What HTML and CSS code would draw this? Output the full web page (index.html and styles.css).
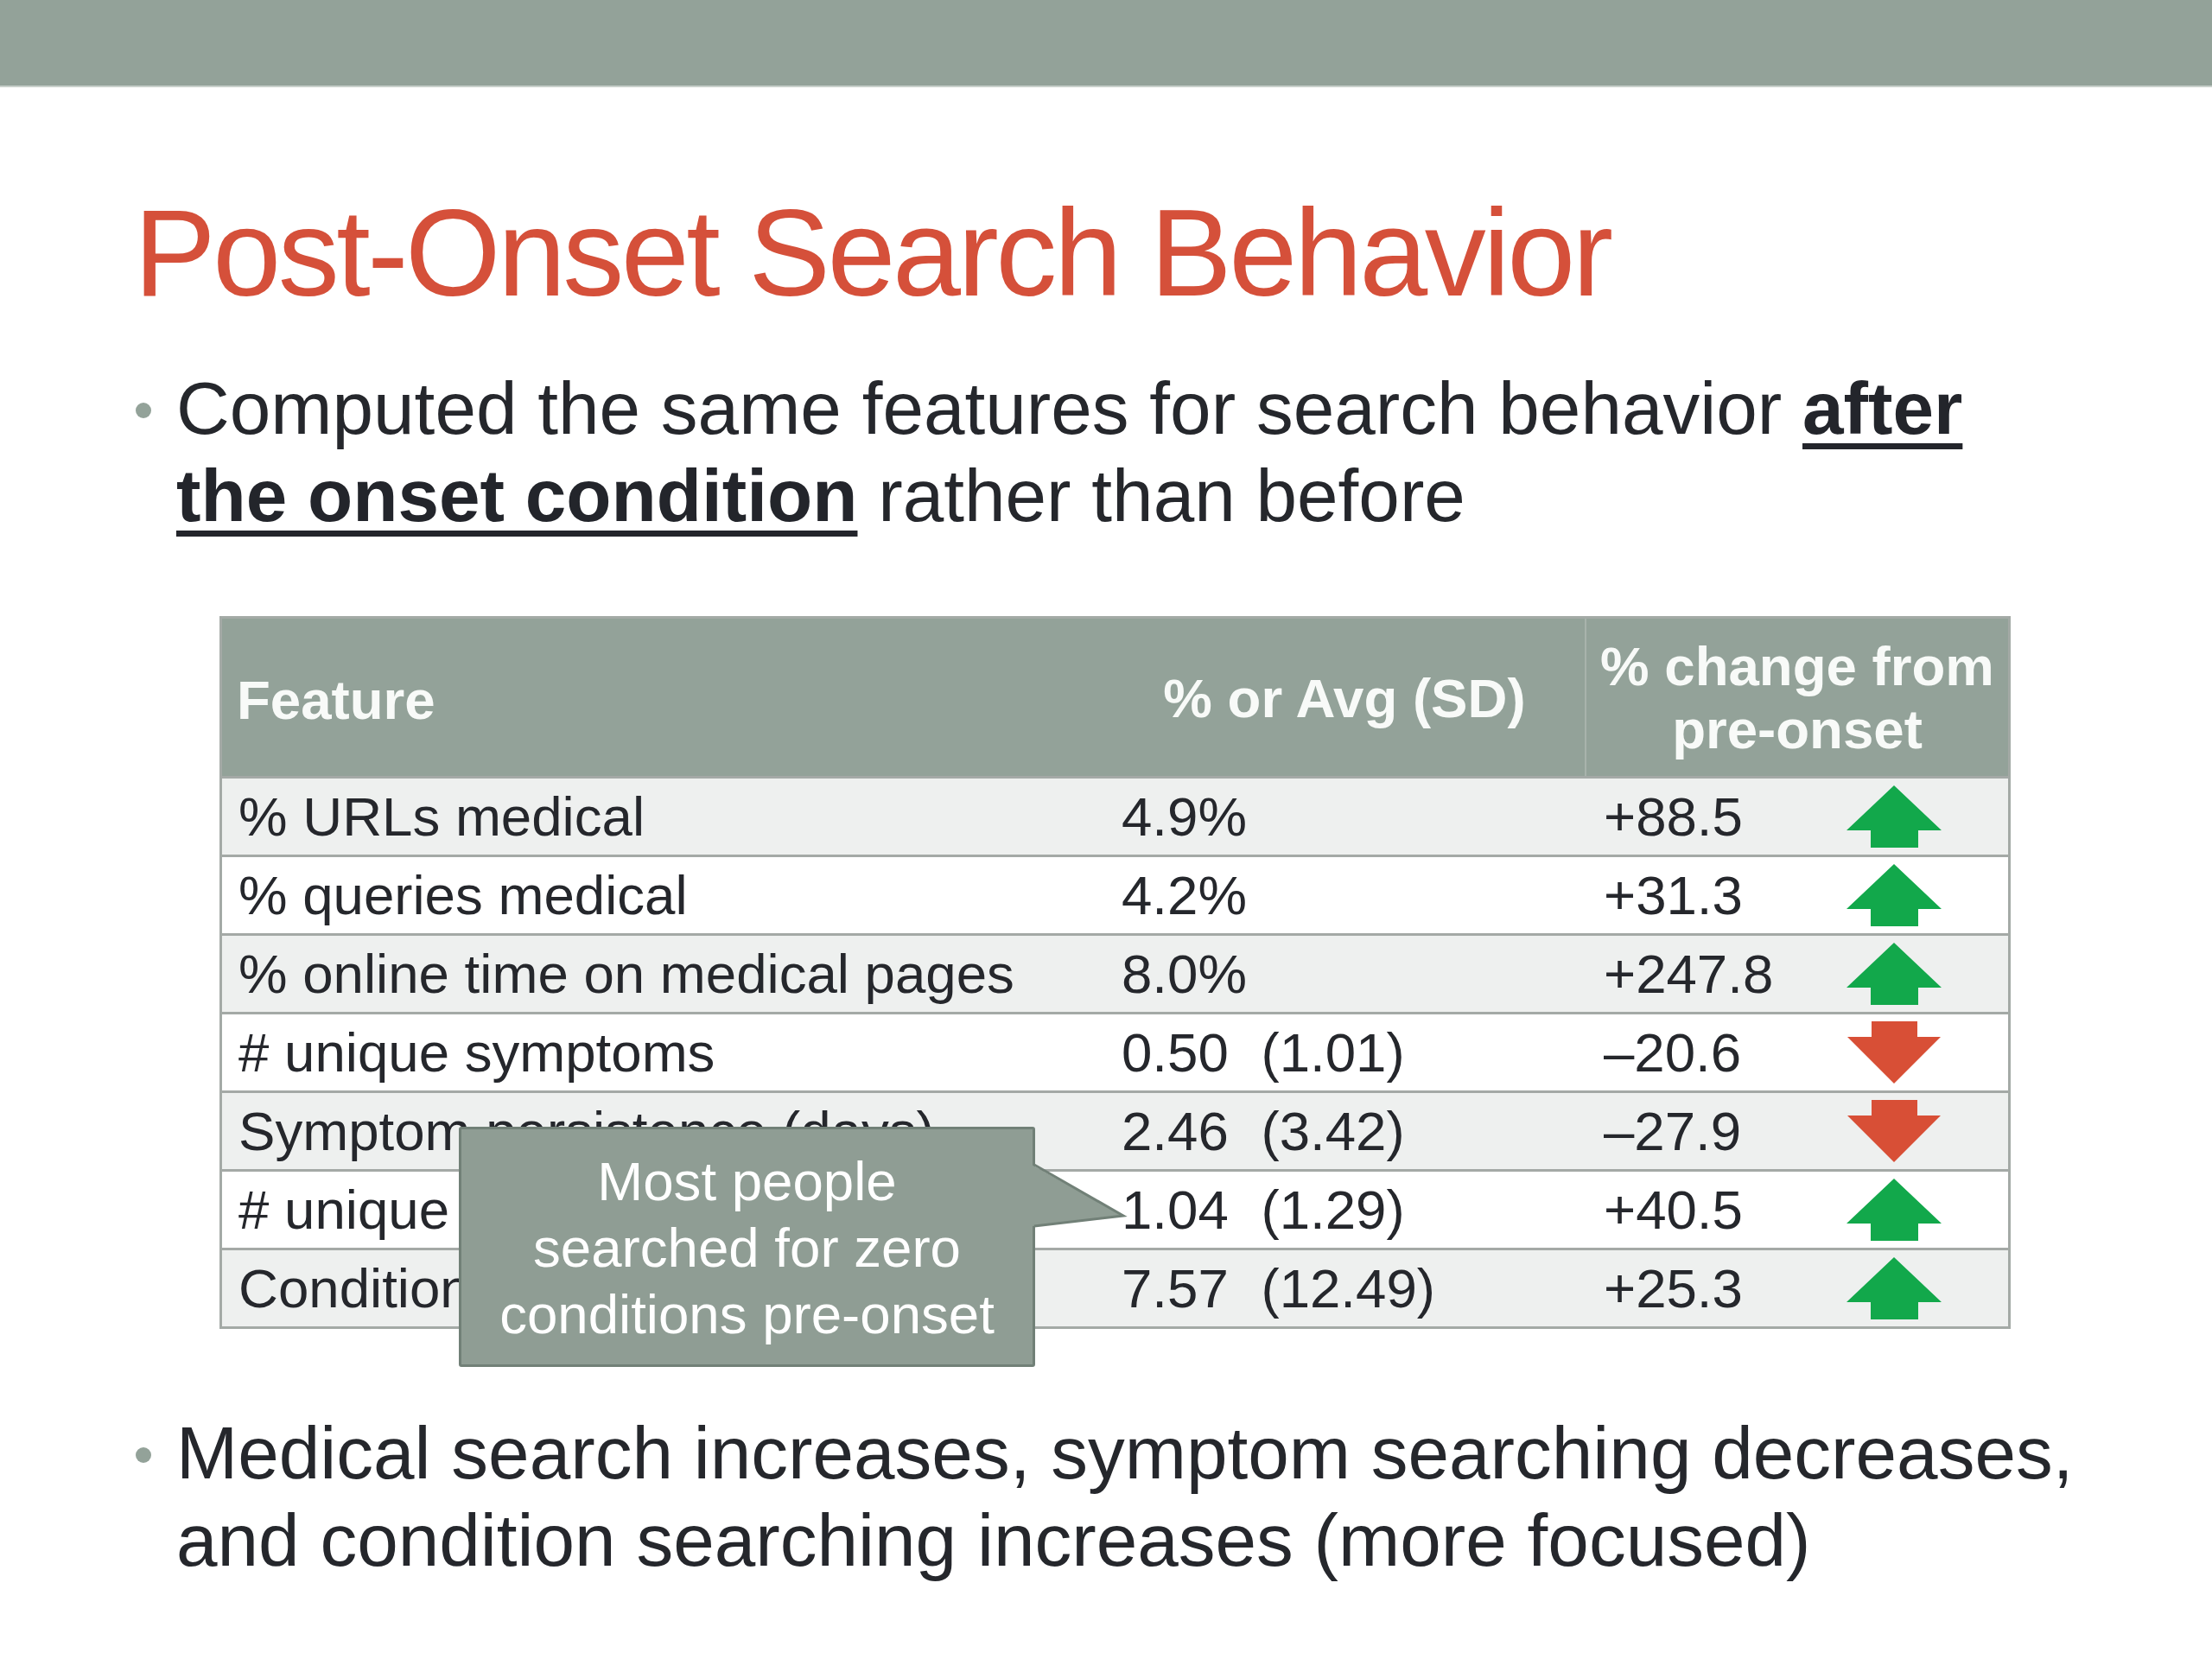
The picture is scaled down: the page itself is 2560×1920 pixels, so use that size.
FILE: index.html
```html
<!DOCTYPE html>
<html>
<head>
<meta charset="utf-8">
<title>Post-Onset Search Behavior</title>
<link rel="stylesheet" href="styles.css">
</head>
<body>
<div class="slide">
  <div class="topbar"></div>
  <h1 class="title">Post-Onset Search Behavior</h1>
  <ul class="bullets first">
    <li>Computed the same features for search behavior <strong class="em">after<br>the onset condition</strong> rather than before</li>
  </ul>

  <div class="tbl">
    <div class="thead">
      <div class="th c1">Feature</div>
      <div class="th c2">% or Avg (SD)</div>
      <div class="th c3">% change from<br>pre-onset</div>
    </div>
    <div class="tr odd">
      <div class="td c1">% URLs medical</div>
      <div class="td c2">4.9%</div>
      <div class="td c3"><span class="num">+88.5</span><svg class="arrow up" viewBox="0 0 110 72"><path d="M55 0 L110 52 L83 52 L83 72 L28 72 L28 52 L0 52 Z"/></svg></div>
    </div>
    <div class="tr">
      <div class="td c1">% queries medical</div>
      <div class="td c2">4.2%</div>
      <div class="td c3"><span class="num">+31.3</span><svg class="arrow up" viewBox="0 0 110 72"><path d="M55 0 L110 52 L83 52 L83 72 L28 72 L28 52 L0 52 Z"/></svg></div>
    </div>
    <div class="tr odd">
      <div class="td c1">% online time on medical pages</div>
      <div class="td c2">8.0%</div>
      <div class="td c3"><span class="num">+247.8</span><svg class="arrow up" viewBox="0 0 110 72"><path d="M55 0 L110 52 L83 52 L83 72 L28 72 L28 52 L0 52 Z"/></svg></div>
    </div>
    <div class="tr">
      <div class="td c1"># unique symptoms</div>
      <div class="td c2">0.50 <span class="sd">(1.01)</span></div>
      <div class="td c3"><span class="num">–20.6</span><svg class="arrow down" viewBox="0 0 110 72"><path d="M29 0 L82 0 L82 18 L109 18 L55 72 L1 18 L29 18 Z"/></svg></div>
    </div>
    <div class="tr odd">
      <div class="td c1">Symptom persistence (days)</div>
      <div class="td c2">2.46 <span class="sd">(3.42)</span></div>
      <div class="td c3"><span class="num">–27.9</span><svg class="arrow down" viewBox="0 0 110 72"><path d="M29 0 L82 0 L82 18 L109 18 L55 72 L1 18 L29 18 Z"/></svg></div>
    </div>
    <div class="tr">
      <div class="td c1"># unique conditions</div>
      <div class="td c2">1.04 <span class="sd">(1.29)</span></div>
      <div class="td c3"><span class="num">+40.5</span><svg class="arrow up" viewBox="0 0 110 72"><path d="M55 0 L110 52 L83 52 L83 72 L28 72 L28 52 L0 52 Z"/></svg></div>
    </div>
    <div class="tr odd">
      <div class="td c1">Condition persistence (days)</div>
      <div class="td c2">7.57 <span class="sd">(12.49)</span></div>
      <div class="td c3"><span class="num">+25.3</span><svg class="arrow up" viewBox="0 0 110 72"><path d="M55 0 L110 52 L83 52 L83 72 L28 72 L28 52 L0 52 Z"/></svg></div>
    </div>
  </div>

  <ul class="bullets second">
    <li>Medical search increases, symptom searching decreases,<br>and condition searching increases (more focused)</li>
  </ul>

  <div class="callout">
    <div class="bubble">Most people<br>searched for zero<br>conditions pre-onset</div>
    <svg class="tail" viewBox="0 0 780 278">
      <polygon class="tail-fill" points="663,44 769,103 663,115"/>
      <polyline class="tail-line" points="666,44 769,103 666,115"/>
    </svg>
  </div>
</div>
</body>
</html>
```

FILE: styles.css
```css
* { box-sizing: border-box; }

html, body {
  margin: 0;
  padding: 0;
}

body {
  width: 2560px;
  height: 1920px;
  background: #ffffff;
  font-family: "Liberation Sans", Arial, sans-serif;
  color: #25272c;
  overflow: hidden;
}

.slide {
  position: relative;
  width: 2560px;
  height: 1920px;
}

.topbar {
  height: 101px;
  background: #93a299;
  border-bottom: 2px solid #c8d0cb;
}

.title {
  margin: 121px 0 0 155px;
  font-weight: 400;
  font-size: 142px;
  line-height: 142px;
  letter-spacing: -3.5px;
  color: #d5503a;
}

.bullets {
  list-style: none;
  margin: 58px 0 0 0;
  padding: 0 0 0 204px;
  font-size: 85.5px;
  line-height: 101px;
  white-space: nowrap;
}

.bullets li {
  position: relative;
}

.bullets li::before {
  content: "";
  position: absolute;
  left: -47px;
  top: 44px;
  width: 18px;
  height: 18px;
  border-radius: 50%;
  background: #93a299;
}

.bullets.second {
  margin-top: 93px;
}

.em {
  font-weight: 700;
  color: #23252b;
  text-decoration: underline;
  text-decoration-thickness: 7px;
  text-underline-offset: 11px;
}

/* table */
.tbl {
  margin: 89px 0 0 254px;
  width: 2073px;
  border: 3px solid #a4aaa6;
  font-size: 63.6px;
}

.thead {
  display: grid;
  grid-template-columns: 1021px 556px 490px;
  height: 182px;
  background: #93a299;
  color: #f8faf8;
  font-weight: 700;
}

.th {
  display: flex;
  align-items: center;
}

.th.c1 {
  padding-left: 17px;
  padding-top: 4px;
}

.th.c2 {
  justify-content: center;
}

.th.c3 {
  justify-content: center;
  text-align: center;
  line-height: 73px;
  border-left: 2px solid #a8b3ac;
}

.tr {
  display: grid;
  grid-template-columns: 1021px 556px 490px;
  height: 91px;
  border-top: 3px solid #a4a9a6;
  line-height: 88px;
  background: #ffffff;
}

.tr.odd {
  background: #eef0ef;
}

.td {
  white-space: nowrap;
}

.td.c1 {
  padding-left: 19px;
}

.td.c2 {
  padding-left: 20px;
}

.sd {
  margin-left: 20px;
}

.td.c3 {
  display: flex;
  align-items: center;
  padding-left: 22px;
}

.num {
  width: 281px;
  flex: none;
}

.arrow {
  display: block;
  width: 110px;
  height: 72px;
  flex: none;
}

.arrow.up path { fill: #12a84b; }
.arrow.down path { fill: #d84f36; }

/* callout */
.callout {
  position: absolute;
  left: 531px;
  top: 1304px;
  width: 667px;
  height: 278px;
}

.bubble {
  height: 100%;
  background: #8f9d94;
  border: 3px solid #718077;
  border-radius: 3px;
  color: #ffffff;
  font-size: 63.6px;
  line-height: 77px;
  text-align: center;
  padding-top: 21px;
}

.tail {
  position: absolute;
  left: 0;
  top: 0;
  width: 780px;
  height: 278px;
  overflow: visible;
}

.tail-fill {
  fill: #8f9d94;
}

.tail-line {
  fill: none;
  stroke: #718077;
  stroke-width: 3;
  stroke-linejoin: miter;
}
```
